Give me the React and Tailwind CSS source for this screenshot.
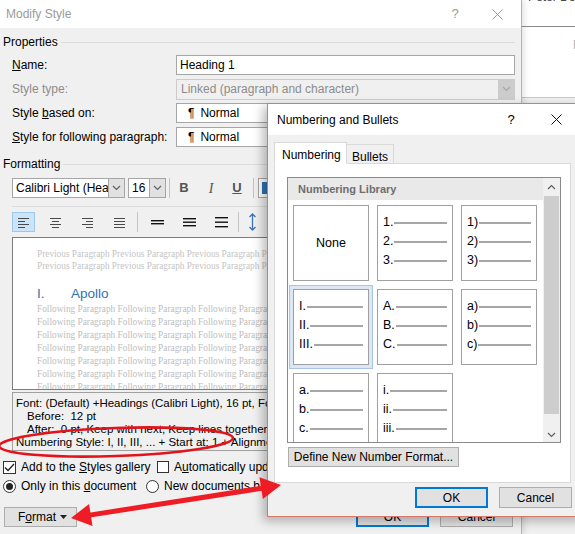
import React from 'react';

const ui = "font-['Liberation_Sans',Arial,sans-serif]";
const serif = "font-['Liberation_Serif','Times_New_Roman',serif]";

/* small drawings */
const Chevron = ({ color = '#606060', up = false }) => (
  <svg width="9" height="6" viewBox="0 0 9 6">
    <polyline
      points={up ? '1,5 4.5,1.5 8,5' : '1,1 4.5,4.5 8,1'}
      fill="none"
      stroke={color}
      strokeWidth="1.2"
    />
  </svg>
);

const Cross = ({ color }) => (
  <svg width="11" height="11" viewBox="0 0 11 11">
    <path d="M0.5 0.5 L10.5 10.5 M10.5 0.5 L0.5 10.5" stroke={color} strokeWidth="1" />
  </svg>
);

const AlignIcon = ({ kind }) => {
  const rows = [11, 7, 11, 7];
  return (
    <svg width="11" height="11" viewBox="0 0 11 11">
      {rows.map((w, i) => {
        const width = kind === 'justify' ? 11 : w;
        let x = 0;
        if (kind === 'center') x = (11 - width) / 2;
        if (kind === 'right') x = 11 - width;
        return <rect key={i} x={x} y={1 + i * 3} width={width} height="1" fill="#4a4a4a" />;
      })}
    </svg>
  );
};

const SpacingIcon = ({ ys }) => (
  <svg width="13" height="12" viewBox="0 0 13 12">
    {ys.map((y) => (
      <rect key={y} x="0" y={y} width="13" height="1.4" fill="#111" />
    ))}
  </svg>
);

/* numbering library cell */
const NumCell = ({ marks, selected }) => (
  <div
    className={`w-[76px] h-[76px] border border-[#a0a0a0] bg-white ${
      selected ? 'shadow-[0_0_0_3px_#dce6f4,0_0_0_4px_#a8c3ea]' : ''
    }`}
  >
    {marks ? (
      <div className="flex flex-col pt-[7px] pl-[5px] pr-[5px]">
        {marks.map((m) => (
          <div key={m} className="h-[19px] flex items-center">
            <span className="text-[12.5px] leading-none text-black">{m}</span>
            <span className="flex-1 h-[2px] bg-[#a6a6a6] ml-[1px]" />
          </div>
        ))}
      </div>
    ) : (
      <div className="h-full flex items-center justify-center text-[12.5px] text-black">None</div>
    )}
  </div>
);

const cells = [
  { key: 'none', marks: null },
  { key: 'dot', marks: ['1.', '2.', '3.'] },
  { key: 'paren', marks: ['1)', '2)', '3)'] },
  { key: 'roman', marks: ['I.', 'II.', 'III.'], selected: true },
  { key: 'upper', marks: ['A.', 'B.', 'C.'] },
  { key: 'lparen', marks: ['a)', 'b)', 'c)'] },
  { key: 'lower', marks: ['a.', 'b.', 'c.'] },
  { key: 'lroman', marks: ['i.', 'ii.', 'iii.'] }
];

const prevLine = 'Previous Paragraph '.repeat(8);
const follLine = 'Following Paragraph '.repeat(8);

const Field = ({ label, children, dim }) => (
  <div className="h-[20px] flex items-center mt-[4px]">
    <div className={`w-[176px] pl-[12px] ${dim ? 'text-[#8c8c8c]' : 'text-black'}`}>{label}</div>
    {children}
  </div>
);

const ModifyStyle = () => (
  <div className="relative z-10 w-[522px] h-[534px] shrink-0 bg-[#f0f0f0] border-r border-[#b4b4b4] shadow-[2px_0_6px_rgba(0,0,0,0.12)] flex flex-col text-[12px]">
    {/* title bar */}
    <div className="h-[28px] bg-white flex items-center pl-[6px] text-[#9a9a9a]">
      <span>Modify Style</span>
      <span className="ml-auto w-[14px] text-center text-[13px]">?</span>
      <span className="ml-[30px] mr-[18px]">
        <Cross color="#9a9a9a" />
      </span>
    </div>

    {/* properties */}
    <div className="h-[16px] mt-[6px] flex items-center pl-[3px]">
      <span>Properties</span>
      <span className="flex-1 h-px bg-[#dcdcdc] ml-[3px] mr-[6px]" />
    </div>
    <div className="mt-[1px]">
      <Field label={<><u>N</u>ame:</>}>
        <div className="w-[339px] h-[20px] border border-[#a6a6a6] bg-white flex items-center pl-[3px]">
          Heading 1
        </div>
      </Field>
      <Field label="Style type:" dim>
        <div className="w-[339px] h-[21px] border border-[#cccccc] bg-[#f0f0f0] flex items-center pl-[4px] text-[#8c8c8c]">
          <span>Linked (paragraph and character)</span>
          <span className="ml-auto w-[16px] h-full bg-[#cccccc] flex items-center justify-center">
            <Chevron color="#a8a8a8" />
          </span>
        </div>
      </Field>
      <Field label={<>Style <u>b</u>ased on:</>}>
        <div className="w-[339px] h-[20px] border border-[#a6a6a6] bg-white flex items-center pl-[11px] gap-[6px]">
          <span>¶</span>
          <span>Normal</span>
        </div>
      </Field>
      <Field label={<><u>S</u>tyle for following paragraph:</>}>
        <div className="w-[339px] h-[20px] border border-[#a6a6a6] bg-white flex items-center pl-[11px] gap-[6px]">
          <span>¶</span>
          <span>Normal</span>
        </div>
      </Field>
    </div>

    {/* formatting */}
    <div className="h-[16px] mt-[9px] flex items-center pl-[3px]">
      <span>Formatting</span>
      <span className="flex-1 h-px bg-[#dcdcdc] ml-[3px] mr-[6px]" />
    </div>
    <div className="h-[20px] mt-[6px] ml-[12px] flex items-center">
      <div className="w-[113px] h-[20px] border border-[#a6a6a6] bg-white flex items-center overflow-hidden">
        <span className="pl-[3px] w-[96px] whitespace-nowrap overflow-hidden">Calibri Light (Headings)</span>
        <span className="ml-auto w-[16px] h-full bg-[#e1e1e1] border-l border-[#a6a6a6] flex items-center justify-center">
          <Chevron />
        </span>
      </div>
      <div className="ml-[3px] w-[38px] h-[20px] border border-[#a6a6a6] bg-white flex items-center">
        <span className="pl-[3px]">16</span>
        <span className="ml-auto w-[16px] h-full bg-[#e1e1e1] border-l border-[#a6a6a6] flex items-center justify-center">
          <Chevron />
        </span>
      </div>
      <span className="ml-[3px] w-px h-[20px] bg-[#c4c4c4]" />
      <span className="w-[28px] text-center font-bold text-[13px] text-[#555]">B</span>
      <span className={`w-[26px] text-center italic text-[14px] text-[#555] ${serif}`}>I</span>
      <span className="w-[26px] text-center font-bold text-[13px] text-[#555] underline">U</span>
      <span className="ml-[3px] w-px h-[20px] bg-[#c4c4c4]" />
      <div className="ml-[4px] w-[26px] h-[20px] border border-[#a6a6a6] bg-white p-[3px]">
        <div className="w-[8px] h-full bg-[#2e74b5]" />
      </div>
    </div>
    <div className="h-px mt-[8px] ml-[12px] mr-[6px] bg-[#dcdcdc]" />
    <div className="h-[20px] mt-[5px] ml-[12px] flex items-center">
      <span className="w-[23px] h-[20px] border border-[#99c9ef] bg-[#cce4f7] flex items-center justify-center">
        <AlignIcon kind="left" />
      </span>
      <span className="ml-[9px] w-[23px] flex justify-center">
        <AlignIcon kind="center" />
      </span>
      <span className="ml-[9px] w-[23px] flex justify-center">
        <AlignIcon kind="right" />
      </span>
      <span className="ml-[9px] w-[23px] flex justify-center">
        <AlignIcon kind="justify" />
      </span>
      <span className="ml-[6px] w-px h-[20px] bg-[#c4c4c4]" />
      <span className="ml-[8px] w-[23px] flex justify-center">
        <SpacingIcon ys={[4, 7]} />
      </span>
      <span className="ml-[9px] w-[23px] flex justify-center">
        <SpacingIcon ys={[2, 5.5, 9]} />
      </span>
      <span className="ml-[9px] w-[23px] flex justify-center">
        <SpacingIcon ys={[1, 5.5, 10]} />
      </span>
      <span className="ml-[5px] w-px h-[20px] bg-[#c4c4c4]" />
      <span className="ml-[9px]">
        <svg width="9" height="18" viewBox="0 0 9 18">
          <path d="M4.5 1 V17 M1.5 4 L4.5 1 L7.5 4 M1.5 14 L4.5 17 L7.5 14" stroke="#3d74b6" strokeWidth="1.3" fill="none" />
        </svg>
      </span>
    </div>

    {/* preview */}
    <div className={`mt-[5px] ml-[12px] mr-[6px] h-[153px] border border-[#7d7d7d] bg-white overflow-hidden pl-[24px] pt-[10px] ${serif}`}>
      <div className="text-[9.3px] leading-[12px] text-[#c4c4c4] whitespace-nowrap">{prevLine}</div>
      <div className="text-[9.3px] leading-[12px] text-[#c4c4c4] whitespace-nowrap">{prevLine}</div>
      <div className={`mt-[13px] h-[18px] flex items-center text-[13.5px] text-[#2e74b5] ${ui}`}>
        <span className="w-[34px]">I.</span>
        <span>Apollo</span>
      </div>
      {[0, 1, 2, 3, 4, 5, 6].map((i) => (
        <div key={i} className="text-[9.3px] leading-[13px] text-[#bdbdbd] whitespace-nowrap">
          {follLine}
        </div>
      ))}
    </div>

    {/* description */}
    <div className="mt-[2px] ml-[12px] mr-[6px] h-[59px] border border-[#a0a0a0] bg-[#f0f0f0] pl-[3px] pt-[4px] text-[11.5px] leading-[13px] whitespace-nowrap overflow-hidden">
      <div>Font: (Default) +Headings (Calibri Light), 16 pt, Font color: Accent 1, Space</div>
      <div className="pl-[11px]">Before:&nbsp; 12 pt</div>
      <div className="pl-[11px]">After:&nbsp; 0 pt, Keep with next, Keep lines together, Level 1</div>
      <div>Numbering Style: I, II, III, ... + Start at: 1 + Alignment: Left + Aligned at: 0"</div>
    </div>

    {/* options */}
    <div className="h-[16px] mt-[8px] pl-[3px] flex items-center">
      <div className="w-[154px] flex items-center">
        <span className="w-[13px] h-[13px] border border-[#333] bg-white flex items-center justify-center">
          <svg width="11" height="9" viewBox="0 0 11 9">
            <polyline points="1,4.5 4,7.5 10,1" fill="none" stroke="#222" strokeWidth="1.3" />
          </svg>
        </span>
        <span className="ml-[5px]">Add to the <u>S</u>tyles gallery</span>
      </div>
      <span className="w-[12px] h-[12px] border border-[#333] bg-white" />
      <span className="ml-[5px] whitespace-nowrap">A<u>u</u>tomatically update</span>
    </div>
    <div className="h-[16px] mt-[3px] pl-[3px] flex items-center">
      <div className="w-[143px] flex items-center">
        <span className="w-[13px] h-[13px] rounded-full border border-[#333] bg-white flex items-center justify-center">
          <span className="w-[7px] h-[7px] rounded-full bg-[#222]" />
        </span>
        <span className="ml-[5px]">Only in this <u>d</u>ocument</span>
      </div>
      <span className="w-[13px] h-[13px] rounded-full border border-[#333] bg-white" />
      <span className="ml-[5px] whitespace-nowrap">New documents based on this template</span>
    </div>

    {/* buttons */}
    <div className="h-[21px] mt-[12px] flex items-center">
      <span className="ml-[4px] w-[73px] h-[20px] border border-[#adadad] bg-[#e1e1e1] flex items-center pl-[13px]">
        F<u>o</u>rmat
        <svg className="ml-[4px]" width="7" height="4" viewBox="0 0 7 4">
          <polygon points="0,0 7,0 3.5,4" fill="#222" />
        </svg>
      </span>
      <span className="ml-auto w-[73px] h-[21px] border-2 border-[#0078d7] bg-[#e1e1e1] flex items-center justify-center">
        OK
      </span>
      <span className="ml-[11px] mr-[8px] w-[73px] h-[21px] border border-[#adadad] bg-[#e1e1e1] flex items-center justify-center">
        Cancel
      </span>
    </div>
  </div>
);

const DocStrip = () => (
  <div className="flex-1 h-[534px] bg-white flex flex-col text-[12px] overflow-hidden">
    <div className="h-[26px] pl-[6px] -mt-[12px] text-[#444] whitespace-nowrap">Peter Doe</div>
    <div className="h-px bg-[#8a8a8a] mt-[12px]" />
    <div className="h-[70px] pl-[51px] pt-[9px] text-[#b0b0b0]">F</div>
    <div className="h-px bg-[#c8c8c8]" />
    <div className="flex-1 bg-[#f0f0f0]" />
  </div>
);

const NumberingDialog = () => (
  <div className="absolute left-[267px] top-[103px] w-[320px] h-[414px] z-20 border border-[#d8786c] bg-[#f0f0f0] shadow-[-4px_4px_10px_rgba(0,0,0,0.28)] flex flex-col text-[12px]">
    {/* title */}
    <div className="h-[31px] shrink-0 bg-white flex items-center pl-[9px] text-black">
      <span className="w-[229px] shrink-0 whitespace-nowrap">Numbering and Bullets</span>
      <span className="w-[10px] shrink-0 text-center text-[13px]">?</span>
      <span className="ml-[35px] shrink-0">
        <Cross color="#111" />
      </span>
    </div>

    {/* tabs */}
    <div className="mt-[7px] ml-[6px] flex items-end h-[22px]">
      <span className="relative z-10 w-[73px] h-[22px] border border-[#d9d9d9] border-b-white bg-white pl-[7px] pt-[3px]">
        Numbering
      </span>
      <span className="w-[47px] h-[20px] border border-l-0 border-b-0 border-[#d9d9d9] bg-[#f0f0f0] pl-[5px] pt-[3px]">
        Bullets
      </span>
    </div>
    <div className="-mt-px ml-[6px] w-[297px] h-[320px] border border-[#d9d9d9] bg-white flex flex-col">
      {/* list box */}
      <div className="mt-[13px] ml-[12px] w-[274px] h-[266px] border border-[#8a8a8a] flex overflow-hidden">
        <div className="flex-1 flex flex-col overflow-hidden">
          <div className="h-[22px] shrink-0 bg-[#e9e9e9] flex items-center pl-[10px] font-bold text-[11px] text-[#6e6e6e]">
            Numbering Library
          </div>
          <div className="pl-[5px] pt-[5px] grid grid-cols-[76px_76px_76px] gap-[8px]">
            {cells.map((c) => (
              <NumCell key={c.key} marks={c.marks} selected={c.selected} />
            ))}
          </div>
        </div>
        <div className="w-[17px] shrink-0 bg-[#f0f0f0] flex flex-col">
          <div className="h-[18px] flex items-center justify-center">
            <Chevron up />
          </div>
          <div className="h-[218px] mx-px bg-[#cdcdcd]" />
          <div className="flex-1 flex items-end justify-center pb-[4px]">
            <Chevron />
          </div>
        </div>
      </div>
      <div className="mt-[4px] ml-[13px] w-[171px] h-[20px] border border-[#adadad] bg-[#e1e1e1] flex items-center justify-center">
        Define New Number Format...
      </div>
    </div>

    {/* buttons */}
    <div className="mt-[4px] flex">
      <span className="ml-[147px] w-[73px] h-[21px] border-2 border-[#0078d7] bg-[#e1e1e1] flex items-center justify-center">
        OK
      </span>
      <span className="ml-[11px] w-[73px] h-[21px] border border-[#adadad] bg-[#e1e1e1] flex items-center justify-center">
        Cancel
      </span>
    </div>
  </div>
);

const Annotations = () => (
  <svg className="absolute inset-0 z-30 pointer-events-none" width="575" height="534" viewBox="0 0 575 534">
    <ellipse
      cx="116"
      cy="442"
      rx="117"
      ry="14"
      transform="rotate(-2 116 442)"
      fill="none"
      stroke="#e3131b"
      strokeWidth="2.6"
    />
    <line x1="88" y1="515.4" x2="263" y2="488" stroke="#ee1c24" strokeWidth="5" />
    <polygon points="71,518 92.5,526 89.1,504" fill="#ee1c24" />
    <polygon points="281,485 262.9,499 259.5,477.2" fill="#ee1c24" />
  </svg>
);

export default function App() {
  return (
    <div className={`relative w-[575px] h-[534px] overflow-hidden flex bg-white ${ui}`}>
      <ModifyStyle />
      <DocStrip />
      <NumberingDialog />
      <Annotations />
    </div>
  );
}
